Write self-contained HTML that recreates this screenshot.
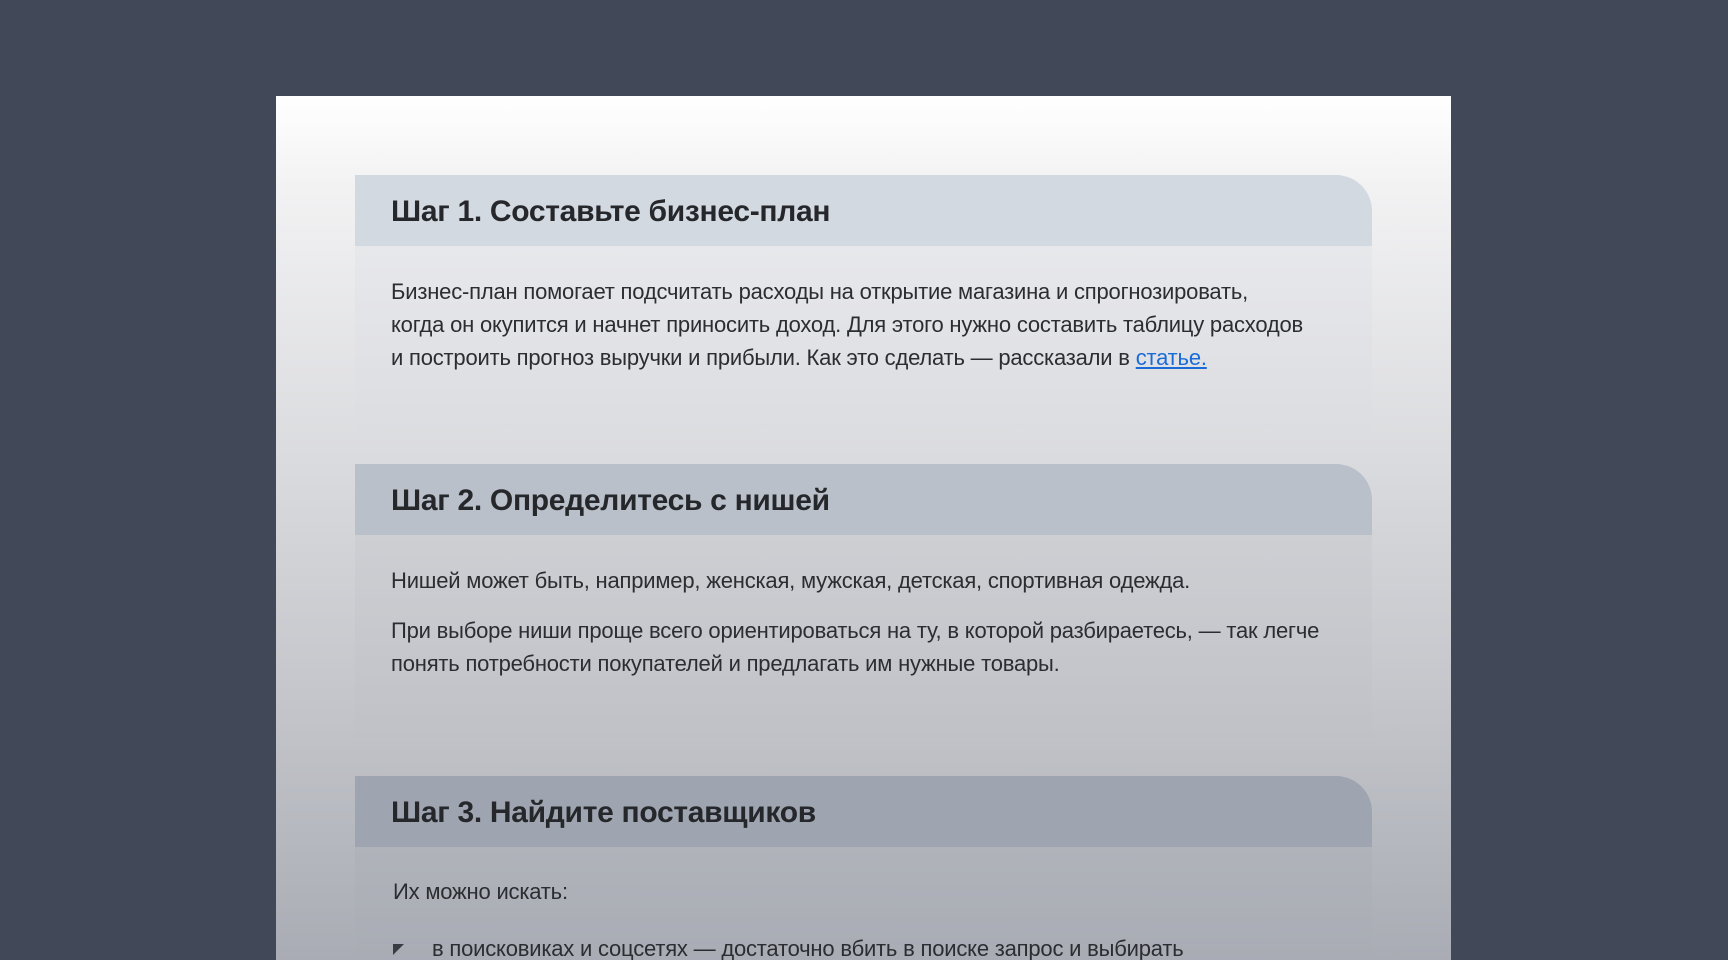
<!DOCTYPE html>
<html><head><meta charset="utf-8"><style>
*{margin:0;padding:0;box-sizing:border-box}
html,body{width:1728px;height:960px;overflow:hidden}
body{background:#414857;position:relative;font-family:"Liberation Sans","Noto Sans CJK SC",sans-serif;color:#2b2d31}
.panel{position:absolute;left:276px;top:96px;width:1175px;height:864px;background:linear-gradient(#ffffff 0px,#f2f2f3 90px,#dcdde0 340px,#c4c6cb 600px,#a9acb4 864px)}
.card{position:absolute;left:355px;width:1017px}
.hd{height:71px;border-top-right-radius:36px;padding-left:36px;font-weight:bold;font-size:30px;line-height:73px;letter-spacing:-0.3px;color:#25272b}
.bd{padding-left:36px;font-size:22px;line-height:33px;white-space:nowrap;letter-spacing:-0.2px}
a{color:#1a6bd8}
</style></head><body>
<div class="panel"></div>
<div class="card" style="top:175px">
<div class="hd" style="background:#d3d9e1">Шаг 1. Составьте бизнес-план</div>
<div class="bd" style="background:linear-gradient(#e7e8eb,#dcdde1);height:184px;padding-top:29px">Бизнес-план помогает подсчитать расходы на открытие магазина и спрогнозировать,<br>когда он окупится и начнет приносить доход. Для этого нужно составить таблицу расходов<br>и построить прогноз выручки и прибыли. Как это сделать — рассказали в <a href="#">статье.</a></div>
</div>
<div class="card" style="top:464px">
<div class="hd" style="background:#b9c0ca">Шаг 2. Определитесь с нишей</div>
<div class="bd" style="background:linear-gradient(#cdcfd3,#bfc1c7);height:203px;padding-top:29px">Нишей может быть, например, женская, мужская, детская, спортивная одежда.<div style="height:17px"></div>При выборе ниши проще всего ориентироваться на ту, в которой разбираетесь, — так легче<br>понять потребности покупателей и предлагать им нужные товары.</div>
</div>
<div class="card" style="top:776px">
<div class="hd" style="background:#9ea5b0">Шаг 3. Найдите поставщиков</div>
<div class="bd" style="background:linear-gradient(#b0b3ba,#a9acb4);height:113px;padding-top:28px;padding-left:38px">Их можно искать:<div style="height:24px"></div><span style="display:inline-block;width:0;height:0;border-top:11px solid #3a3d44;border-right:11px solid transparent;margin-right:28px;vertical-align:1px"></span>в поисковиках и соцсетях — достаточно вбить в поиске запрос и выбирать</div>
</div>
</body></html>
